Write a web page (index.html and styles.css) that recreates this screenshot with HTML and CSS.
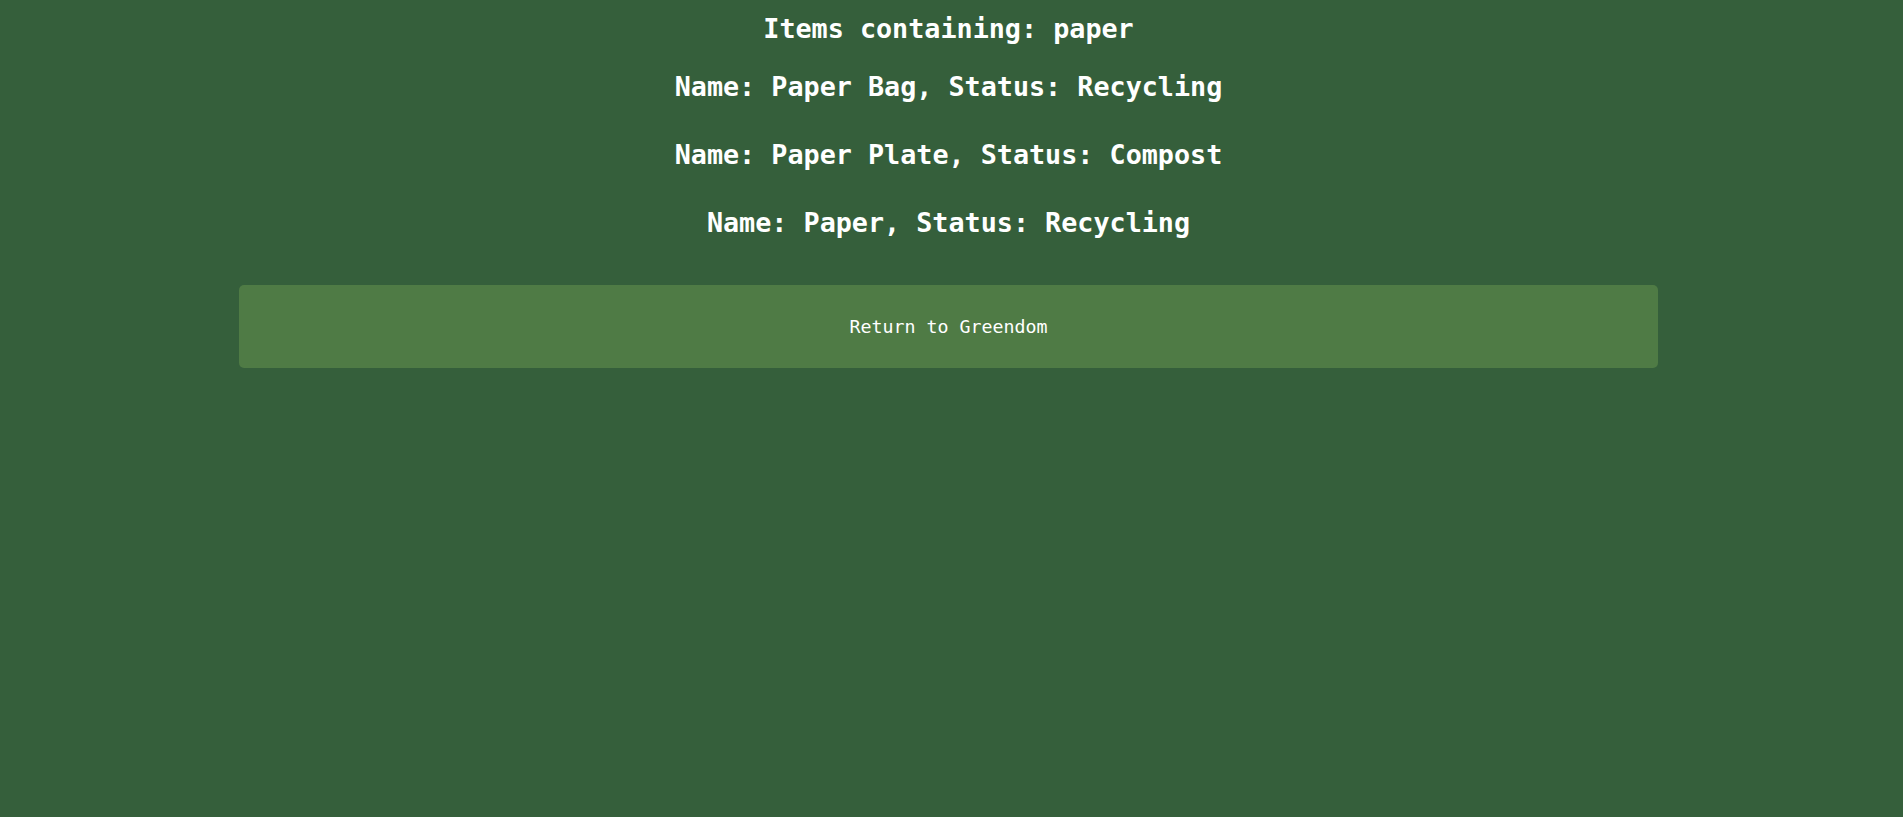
FILE: index.html
```html
<!DOCTYPE html>
<html lang="en">
<head>
<meta charset="utf-8">
<title>Items containing: paper</title>
<link rel="stylesheet" href="styles.css">
</head>
<body>
<main class="page">
  <h2 class="title">Items containing: paper</h2>
  <ul class="items">
    <li class="item">Name: Paper Bag, Status: Recycling</li>
    <li class="item">Name: Paper Plate, Status: Compost</li>
    <li class="item">Name: Paper, Status: Recycling</li>
  </ul>
  <a class="return-btn" href="#">Return to Greendom</a>
</main>
</body>
</html>
```

FILE: styles.css
```css
html, body {
  margin: 0;
  padding: 0;
  background: #355f3b;
  height: 100%;
}

body {
  font-family: "DejaVu Sans Mono", "Liberation Mono", monospace;
  color: #ffffff;
}

.page {
  display: flex;
  flex-direction: column;
  align-items: center;
  padding: 11.5px 6px 0 0;
}

.title {
  margin: 0;
  font-size: 26.75px;
  line-height: 34px;
  font-weight: bold;
}

.items {
  list-style: none;
  margin: 24px 0 0;
  padding: 0;
  display: flex;
  flex-direction: column;
  align-items: center;
  gap: 34px;
}

.item {
  font-size: 26.75px;
  line-height: 34px;
  font-weight: bold;
}

.return-btn {
  margin-top: 45.5px;
  width: 1419px;
  height: 83px;
  display: flex;
  align-items: center;
  justify-content: center;
  background: #4f7b45;
  border-radius: 5px;
  color: #ffffff;
  text-decoration: none;
  font-size: 18.3px;
}
```
